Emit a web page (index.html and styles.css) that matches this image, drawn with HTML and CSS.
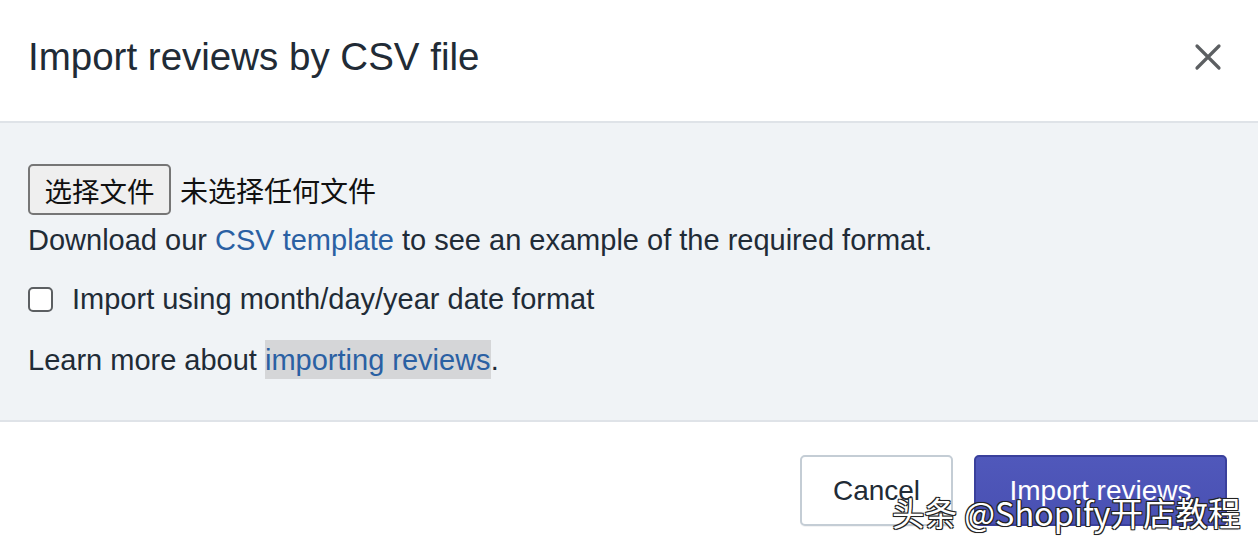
FILE: index.html
```html
<!DOCTYPE html>
<html lang="en">
<head>
<meta charset="utf-8">
<title>Import reviews by CSV file</title>
<link rel="stylesheet" href="styles.css">
</head>
<body>
<div class="modal">
  <header class="modal-header">
    <h1 class="modal-title">Import reviews by CSV file</h1>
    <button class="close-btn" aria-label="Close">
      <svg width="28" height="28" viewBox="0 0 28 28"><path d="M3 3 L25 25 M25 3 L3 25" stroke="#5c5f62" stroke-width="3.2" stroke-linecap="round"/></svg>
    </button>
  </header>
  <section class="modal-body">
    <div class="file-row">
      <span class="file-btn">选择文件</span>
      <span class="file-none">未选择任何文件</span>
    </div>
    <p class="line">Download our <a class="link">CSV template</a> to see an example of the required format.</p>
    <label class="check-row">
      <span class="checkbox"></span>
      <span>Import using month/day/year date format</span>
    </label>
    <p class="line learn">Learn more about <a class="link hl">importing reviews</a>.</p>
  </section>
  <footer class="modal-footer">
    <button class="btn btn-cancel">Cancel</button>
    <button class="btn btn-primary">Import reviews</button>
  </footer>
  <div class="watermark">头条 @Shopify开店教程</div>
</div>
</body>
</html>
```

FILE: styles.css
```css
* { box-sizing: border-box; }
html, body { margin: 0; padding: 0; background: #fff; }
body {
  width: 1258px;
  height: 548px;
  overflow: hidden;
  font-family: "Liberation Sans", Arial, "Noto Sans CJK SC", sans-serif;
  color: #212b36;
}
.modal { position: relative; width: 1258px; height: 548px; display: flex; flex-direction: column; }
.modal-header {
  height: 123px;
  display: flex;
  align-items: center;
  justify-content: space-between;
  padding: 0 36px 8px 28px;
  border-bottom: 2px solid #dfe3e8;
}
.modal-title { margin: 0; font-size: 38.5px; line-height: 44px; font-weight: 400; }
.close-btn { border: 0; background: none; padding: 0; width: 28px; height: 28px; display: flex; }
.modal-body {
  height: 299px;
  background: #f0f3f6;
  border-bottom: 2px solid #dfe3e8;
  padding: 41px 28px 0 28px;
  font-size: 29px;
}
.file-row { display: flex; align-items: center; gap: 9px; height: 51px; }
.file-btn {
  font-family: "Noto Sans CJK SC", sans-serif;
  height: 51px;
  width: 143px;
  display: flex; align-items: center; justify-content: center;
  background: #efefef;
  border: 2px solid #767676;
  border-radius: 5px;
  font-size: 27.5px;
  color: #111;
}
.file-none { font-family: "Noto Sans CJK SC", sans-serif; font-size: 28px; color: #111; }
.line { margin: 0; line-height: 50px; }
.link { color: #2a60a3; text-decoration: none; }
.check-row { display: flex; align-items: center; gap: 19px; height: 68px; }
.checkbox {
  width: 25px; height: 25px;
  border: 2px solid #5c5f62;
  border-radius: 5px;
  background: #fff;
}
.learn { margin-top: 2px; }
.hl { background: #d5d6d8; padding: 4px 0 3px; }
.modal-footer {
  flex: 1;
  display: flex;
  justify-content: flex-end;
  align-items: flex-start;
  gap: 21px;
  padding: 33px 31px 0 0;
}
.btn {
  height: 71px;
  font-family: "Liberation Sans", Arial, sans-serif;
  font-size: 28px;
  border-radius: 5px;
  padding: 0;
}
.btn-cancel {
  width: 153px;
  background: #fff;
  border: 2px solid #c4cdd5;
  color: #212b36;
  box-shadow: 0 1px 0 rgba(22,29,37,.05);
}
.btn-primary {
  width: 253px;
  background: linear-gradient(#5058bb, #4950b2);
  border: 2px solid #3a409c;
  color: #fff;
}
.watermark {
  position: absolute;
  left: 892px;
  top: 496px;
  font-family: "Noto Sans CJK SC", sans-serif;
  font-size: 32.5px;
  color: #fff;
  line-height: 1;
  text-shadow: -1px -1px 0 #222, 1px -1px 0 #222, -1px 1px 0 #222, 1px 1px 0 #222, 0 0 2px #000;
}
```
